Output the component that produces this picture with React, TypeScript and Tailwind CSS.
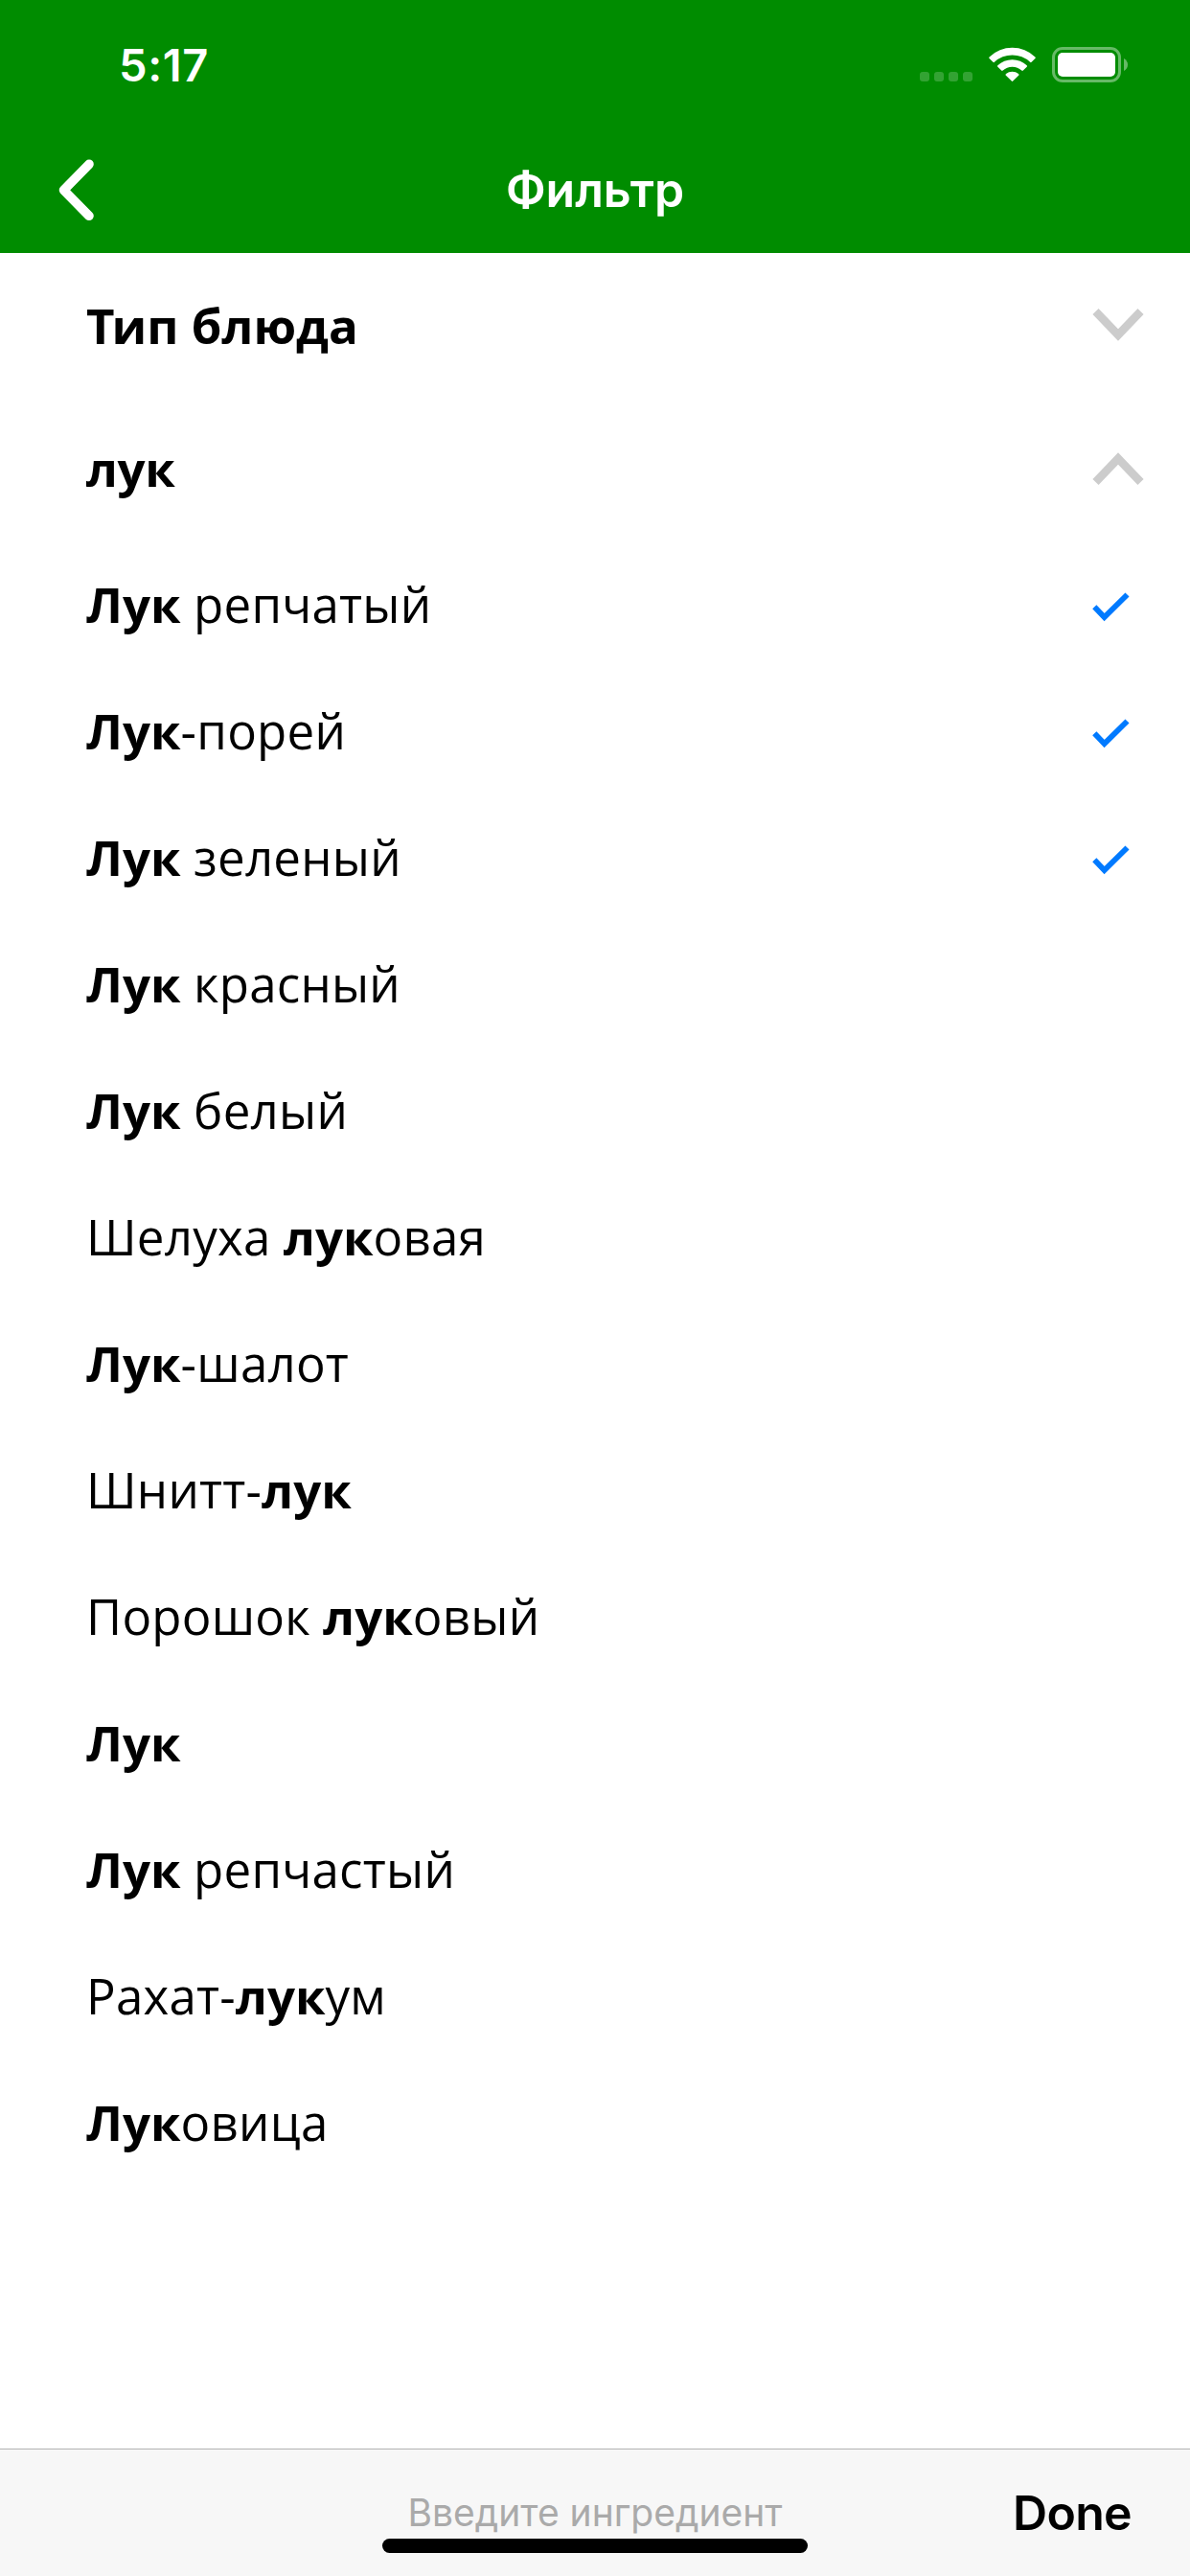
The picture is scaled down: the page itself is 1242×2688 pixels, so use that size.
type Part = { text: string; bold?: boolean };
type Item = { parts: Part[]; checked?: boolean };

const b = (text: string): Part => ({ text, bold: true });
const n = (text: string): Part => ({ text });

const items: Item[] = [
  { parts: [b("Лук"), n(" репчатый")], checked: true },
  { parts: [b("Лук"), n("-порей")], checked: true },
  { parts: [b("Лук"), n(" зеленый")], checked: true },
  { parts: [b("Лук"), n(" красный")] },
  { parts: [b("Лук"), n(" белый")] },
  { parts: [n("Шелуха "), b("лук"), n("овая")] },
  { parts: [b("Лук"), n("-шалот")] },
  { parts: [n("Шнитт-"), b("лук")] },
  { parts: [n("Порошок "), b("лук"), n("овый")] },
  { parts: [b("Лук")] },
  { parts: [b("Лук"), n(" репчастый")] },
  { parts: [n("Рахат-"), b("лук"), n("ум")] },
  { parts: [b("Лук"), n("овица")] },
];

function Chevron({ up = false }: { up?: boolean }) {
  return (
    <svg width="54" height="36" viewBox="0 0 54 36" fill="none" stroke="#cccccc" strokeWidth="8.5">
      <path d={up ? "M3.500 32 27 7.500 50.500 32" : "M3.500 4 27 28.500 50.500 4"} />
    </svg>
  );
}

function Check() {
  return (
    <svg className="mt-[6px]" width="40" height="32" viewBox="0 0 40 32" fill="none" stroke="#007aff" strokeWidth="5.8">
      <path d="M2.300 16.200 12.600 27 36.500 3.500" />
    </svg>
  );
}

function StatusBar() {
  return (
    <div className="flex h-[132px] items-start justify-between pl-[124px] pr-[65px]">
      <span className="pt-[40px] font-['Inter',sans-serif] text-[47px] font-semibold leading-[56px] tracking-[0.6px]">
        5:17
      </span>
      <div className="flex pt-[49px]">
        <div className="mt-[26px] flex gap-[5px]">
          <i className="size-[10px] rounded-[3px] bg-white/20" />
          <i className="size-[10px] rounded-[3px] bg-white/20" />
          <i className="size-[10px] rounded-[3px] bg-white/20" />
          <i className="size-[10px] rounded-[3px] bg-white/20" />
        </div>
        <svg className="ml-[17px]" width="49" height="36" viewBox="0 0 49 36" fill="#fff">
          <path d="M0.6 10.4A34.6 34.6 0 0 1 48.4 10.4Q49.2 11.2 48.4 12L44.6 15.8Q43.9 16.5 43.1 15.8A27.2 27.2 0 0 0 5.9 15.8Q5.100 16.500 4.400 15.800L0.600 12Q-0.200 11.200 0.600 10.400Z" />
          <path d="M9.300 19.200A22.300 22.300 0 0 1 39.700 19.200Q40.500 20 39.700 20.800L35.800 24.600Q35.100 25.300 34.300 24.600A14.400 14.400 0 0 0 14.700 24.600Q13.900 25.300 13.200 24.600L9.300 20.800Q8.500 20 9.300 19.200Z" />
          <path d="M18 28.100A10 10 0 0 1 31 28.100Q31.900 28.900 31.100 29.700L25.200 35.600Q24.500 36.200 23.800 35.600L17.900 29.700Q17.100 28.900 18 28.100Z" />
        </svg>
        <svg className="ml-[17px]" width="79" height="37" viewBox="0 0 79 37">
          <rect x="1.500" y="1.500" width="69" height="34" rx="9.500" fill="none" stroke="#fff" strokeOpacity=".4" strokeWidth="3" />
          <rect x="6" y="6" width="60" height="25" rx="5" fill="#fff" />
          <path d="M75 12Q79 14.500 79 18.500T75 25Z" fill="#fff" fillOpacity=".4" />
        </svg>
      </div>
    </div>
  );
}

export default function App() {
  return (
    <div className="flex h-[2688px] w-[1242px] flex-col overflow-hidden bg-white font-['Open_Sans','Noto_Sans',sans-serif] text-[51px] text-black">
      <header className="h-[264px] shrink-0 bg-[#008c00] text-white">
        <StatusBar />
        <div className="grid h-[132px] grid-cols-[1fr_auto_1fr] items-center">
          <svg className="ml-[60px]" width="40" height="66" viewBox="0 0 40 66" fill="none" stroke="#fff" strokeWidth="9.600" strokeLinecap="round" strokeLinejoin="round">
            <path d="M33 6.300 6.500 33.300 33 60.300" />
          </svg>
          <h1 className="font-['Inter',sans-serif] text-[50px] font-semibold leading-[60px]">Фильтр</h1>
          <span />
        </div>
      </header>
      <main className="flex-1">
        <section className="flex h-[150px] items-center justify-between pl-[90px] pr-[48px]">
          <h2 className="font-bold leading-[70px]">
            <span className="tracking-[-3px]">Т</span>ип блюда
          </h2>
          <Chevron />
        </section>
        <section className="flex h-[150px] items-center justify-between pl-[90px] pr-[48px]">
          <h2 className="pb-[2px] font-bold leading-[70px] tracking-[-0.3px]">лук</h2>
          <Chevron up />
        </section>
        <ul>
          {items.map((item, i) => (
            <li key={i} className="flex h-[132px] items-center justify-between pl-[90px] pr-[62px]">
              <span className="whitespace-pre leading-[70px]">
                {item.parts.map((p, j) => (
                  <span key={j} className={p.bold ? "font-bold" : "font-normal tracking-[0.25px]"}>{p.text}</span>
                ))}
              </span>
              {item.checked && <Check />}
            </li>
          ))}
        </ul>
      </main>
      <footer className="relative grid h-[133px] shrink-0 grid-cols-[1fr_auto_1fr] items-center border-t border-[#b2b2b2] bg-[#f7f7f7] font-['Inter',sans-serif]">
        <span />
        <span className="text-[39px] leading-[48px] text-[#aaaaaa]">Введите ингредиент</span>
        <span className="pr-[61px] text-right text-[50px] font-semibold leading-[60px] tracking-[-0.7px]">Done</span>
        <div className="absolute left-[399px] top-[93px] h-[15px] w-[444px] rounded-full bg-black" />
      </footer>
    </div>
  );
}
